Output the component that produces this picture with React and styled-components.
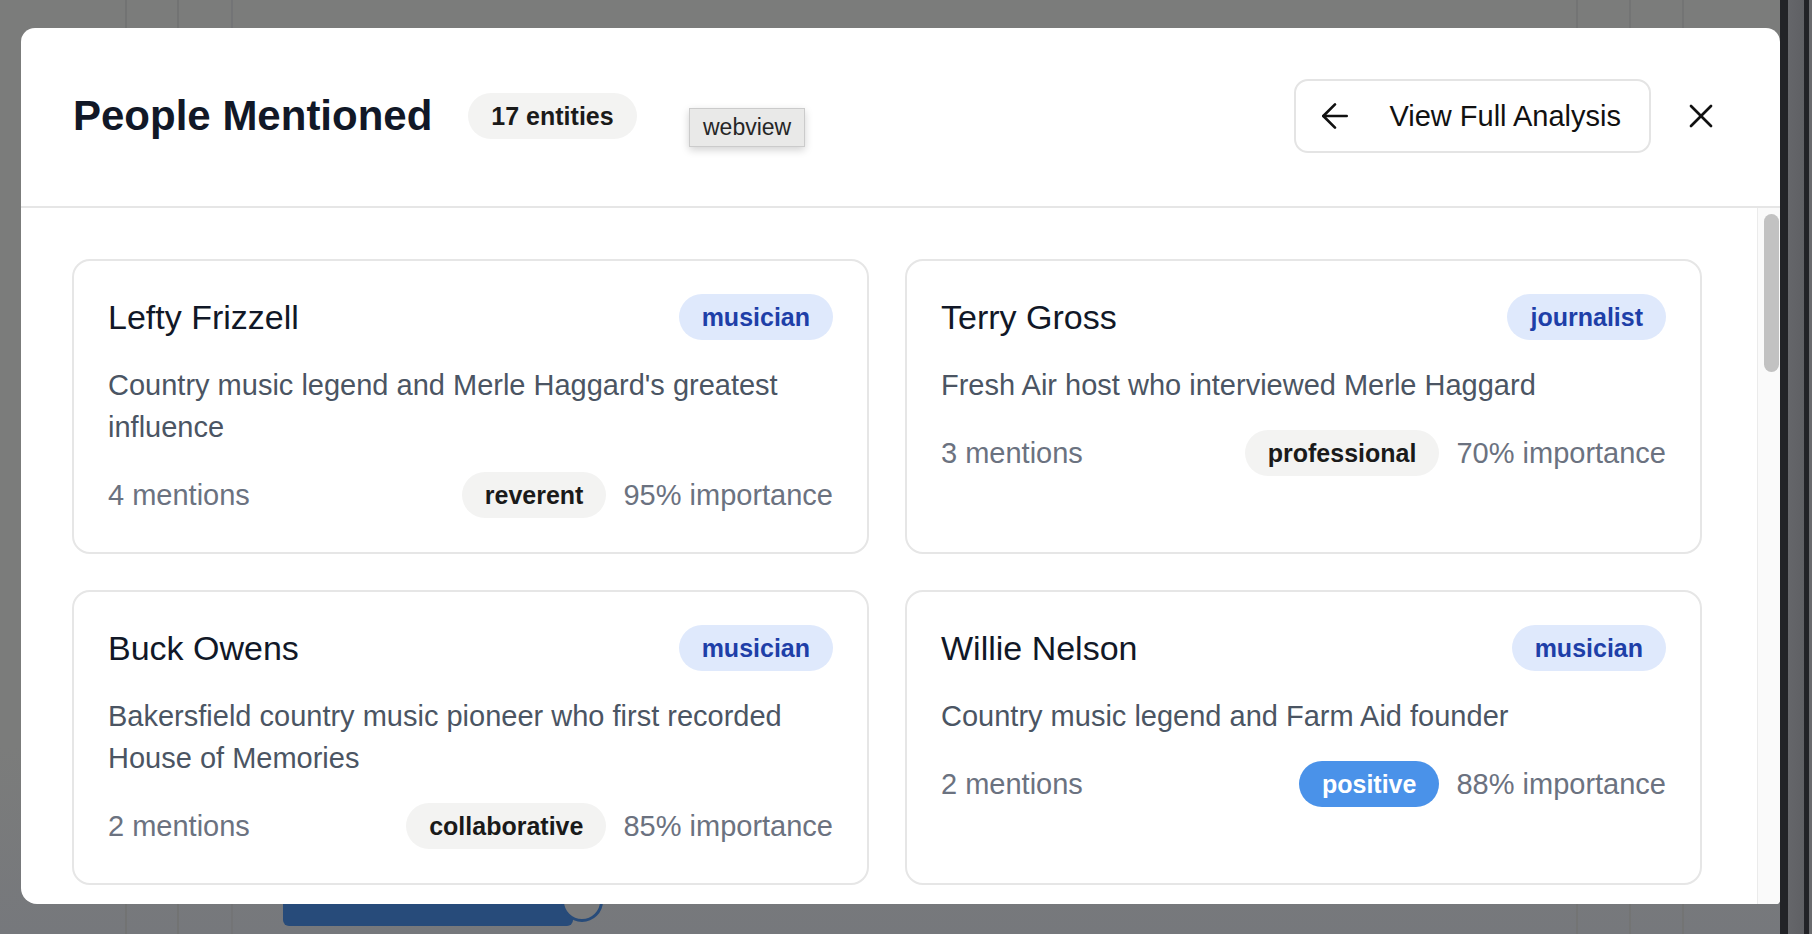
import styled, { createGlobalStyle } from "styled-components";
import { ArrowLeft, X } from "lucide-react";

// only the cards that fit in the first screen of the scroll area
const people = [
  { name: "Lefty Frizzell", role: "musician", desc: "Country music legend and Merle Haggard's greatest influence", mentions: 4, tone: "reverent", score: 95 },
  { name: "Terry Gross", role: "journalist", desc: "Fresh Air host who interviewed Merle Haggard", mentions: 3, tone: "professional", score: 70 },
  { name: "Buck Owens", role: "musician", desc: "Bakersfield country music pioneer who first recorded House of Memories", mentions: 2, tone: "collaborative", score: 85 },
  { name: "Willie Nelson", role: "musician", desc: "Country music legend and Farm Aid founder", mentions: 2, tone: "positive", score: 88 },
];

export default function App() {
  return (
    <>
      <GlobalStyle />
      <Screen>
        <Stage>
          <SliderBehind>
            <SliderBar />
            <SliderKnob />
          </SliderBehind>

          <Modal>
            <Header>
              <Title>People Mentioned</Title>
              <CountBadge>17 entities</CountBadge>
              <Tooltip>webview</Tooltip>
              <Spacer />
              <ViewButton>
                <ArrowLeft size={40} strokeWidth={1.6} />
                View Full Analysis
              </ViewButton>
              <CloseButton aria-label="Close">
                <X size={40} strokeWidth={1.6} />
              </CloseButton>
            </Header>

            <Body>
              <Content>
                <Grid>
                  {people.map((p) => (
                    <Card key={p.name}>
                      <CardTop>
                        <Name>{p.name}</Name>
                        <RoleBadge>{p.role}</RoleBadge>
                      </CardTop>
                      <Desc>{p.desc}</Desc>
                      <CardFoot>
                        <Muted>
                          {p.mentions} {p.mentions === 1 ? "mention" : "mentions"}
                        </Muted>
                        <FootRight>
                          <ToneBadge $positive={p.tone === "positive"}>
                            {p.tone}
                          </ToneBadge>
                          <Muted>{p.score}% importance</Muted>
                        </FootRight>
                      </CardFoot>
                    </Card>
                  ))}
                </Grid>
              </Content>
              <ScrollRail>
                <ScrollThumb />
              </ScrollRail>
            </Body>
          </Modal>
        </Stage>
        <WindowEdge />
      </Screen>
    </>
  );
}

const GlobalStyle = createGlobalStyle`
  html, body {
    margin: 0;
    padding: 0;
    overflow: hidden;
    background: #7b7c7b;
    font-family: "Liberation Sans", Arial, sans-serif;
  }
  * {
    box-sizing: border-box;
  }
`;

const Screen = styled.div`
  display: flex;
  width: 1812px;
  height: 934px;
`;

const Stage = styled.div`
  position: relative;
  flex: 1;
  padding: 28px 0 30px 21px;
  display: flex;
  background-color: #7a7b7b;
  background-image: linear-gradient(
      90deg,
      transparent 125px,
      #727373 125px,
      #727373 127px,
      transparent 127px,
      transparent 177px,
      #727373 177px,
      #727373 179px,
      transparent 179px,
      transparent 231px,
      #737476 231px,
      #737476 233px,
      transparent 233px
    ),
    linear-gradient(
      90deg,
      transparent 1576px,
      #737474 1576px,
      #737474 1578px,
      transparent 1578px,
      transparent 1629px,
      #737474 1629px,
      #737474 1631px,
      transparent 1631px,
      transparent 1682px,
      #737474 1682px,
      #737474 1684px,
      transparent 1684px
    ),
    linear-gradient(180deg, #7b7c7b 0%, #7b7c7b 80%, #76787c 100%);
`;

const SliderBehind = styled.div`
  position: absolute;
  left: 283px;
  top: 880px;
  display: flex;
  align-items: flex-end;
`;

const SliderBar = styled.div`
  width: 290px;
  height: 37px;
  background: #274b7a;
  border-radius: 0 0 6px 6px;
`;

const SliderKnob = styled.div`
  width: 42px;
  height: 42px;
  margin: 0 0 4px -12px;
  border-radius: 50%;
  border: 3px solid #274b7a;
  background: #7a7b7c;
`;

const WindowEdge = styled.div`
  width: 32px;
  height: 100%;
  background: linear-gradient(
    90deg,
    #222327 0,
    #222327 8px,
    #65666a 8px,
    #5f6064 24px,
    #222327 24px,
    #222327 29px,
    #6a6b6e 29px
  );
`;

const Modal = styled.section`
  position: relative;
  flex: 1;
  display: flex;
  flex-direction: column;
  background: #fff;
  border-radius: 14px 14px 4px 16px;
  overflow: hidden;
`;

const Header = styled.header`
  position: relative;
  display: flex;
  align-items: center;
  flex-shrink: 0;
  height: 180px;
  padding: 0 51px 2px 52px;
  border-bottom: 2px solid #e6e6e6;
`;

const Title = styled.h2`
  margin: 0;
  font-size: 42px;
  font-weight: 700;
  color: #111827;
`;

const Pill = styled.span`
  display: inline-flex;
  align-items: center;
  height: 46px;
  padding: 0 23px;
  border-radius: 23px;
  font-size: 25px;
  font-weight: 700;
  white-space: nowrap;
`;

const CountBadge = styled(Pill)`
  margin-left: 36px;
  background: #f3f3f2;
  color: #1a1a1a;
`;

const Tooltip = styled.div`
  position: absolute;
  left: 668px;
  top: 80px;
  height: 39px;
  padding: 0 13px;
  display: flex;
  align-items: center;
  font-size: 23px;
  color: #262626;
  background: #e9e9e8;
  border: 1px solid #cbcbcb;
  box-shadow: 0 3px 8px rgba(0, 0, 0, 0.18);
`;

const Spacer = styled.div`
  flex: 1;
`;

const ViewButton = styled.button`
  display: flex;
  align-items: center;
  gap: 34px;
  height: 74px;
  padding: 0 28px 0 19px;
  border: 2px solid #e4e4e4;
  border-radius: 14px;
  background: #fff;
  color: #111;
  font-family: inherit;
  font-size: 29px;
  cursor: pointer;
`;

const CloseButton = styled.button`
  display: flex;
  align-items: center;
  justify-content: center;
  width: 56px;
  height: 56px;
  margin-left: 22px;
  padding: 0;
  border: none;
  background: none;
  color: #111;
  cursor: pointer;
`;

const Body = styled.div`
  flex: 1;
  display: flex;
  min-height: 0;
`;

const Content = styled.div`
  flex: 1;
  overflow: hidden;
  padding: 51px 55px 0 51px;
`;

const ScrollRail = styled.div`
  width: 23px;
  flex-shrink: 0;
  padding: 6px 0 0 6px;
  background: #fafafa;
  border-left: 1px solid #ebebeb;
`;

const ScrollThumb = styled.div`
  width: 15px;
  height: 158px;
  border-radius: 8px;
  background: #c2c2c2;
`;

const Grid = styled.div`
  display: grid;
  grid-template-columns: 1fr 1fr;
  gap: 36px;
`;

const Card = styled.article`
  display: flex;
  flex-direction: column;
  gap: 24px;
  padding: 33px 34px 34px;
  border: 2px solid #e6e6e6;
  border-radius: 18px;
  background: #fff;
`;

const CardTop = styled.div`
  display: flex;
  align-items: center;
  justify-content: space-between;
  gap: 16px;
`;

const Name = styled.h3`
  margin: 0;
  font-size: 34px;
  font-weight: 400;
  color: #111827;
`;

const RoleBadge = styled(Pill)`
  background: #dfe9fc;
  color: #1e3fa8;
`;

const Desc = styled.p`
  margin: 0;
  font-size: 29px;
  line-height: 42px;
  color: #4b5563;
`;

const CardFoot = styled.div`
  display: flex;
  align-items: center;
  justify-content: space-between;
`;

const FootRight = styled.div`
  display: flex;
  align-items: center;
  gap: 17px;
`;

const Muted = styled.span`
  font-size: 29px;
  color: #6b7280;
`;

const ToneBadge = styled(Pill)`
  background: ${(p) => (p.$positive ? "#4a92e9" : "#f3f3f2")};
  color: ${(p) => (p.$positive ? "#fff" : "#1a1a1a")};
`;
